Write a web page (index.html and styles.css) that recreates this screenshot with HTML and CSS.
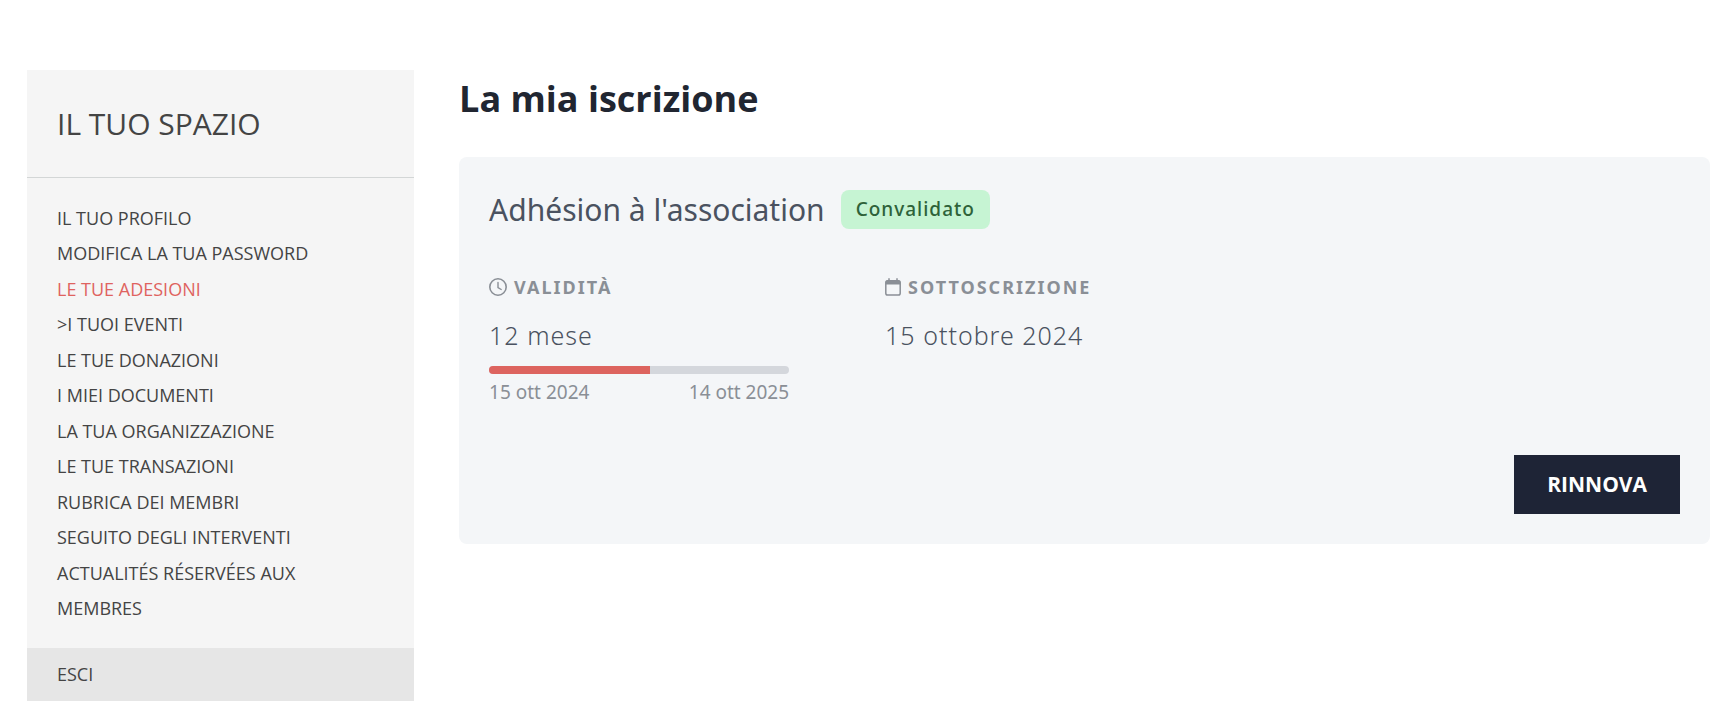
FILE: index.html
```html
<!DOCTYPE html>
<html lang="it">

<head>
    <meta charset="UTF-8">
    <meta name="viewport" content="width=device-width, initial-scale=1.0">
    <title>La mia iscrizione</title>
    <link rel="stylesheet" href="styles.css">
</head>

<body>
    <div class="page">
        <aside class="sidebar">
            <h2 class="sidebar-title">IL TUO SPAZIO</h2>
            <nav>
                <ul class="menu">
                    <li><a href="#">IL TUO PROFILO</a></li>
                    <li><a href="#">MODIFICA LA TUA PASSWORD</a></li>
                    <li><a href="#" class="active">LE TUE ADESIONI</a></li>
                    <li><a href="#">&gt;I TUOI EVENTI</a></li>
                    <li><a href="#">LE TUE DONAZIONI</a></li>
                    <li><a href="#">I MIEI DOCUMENTI</a></li>
                    <li><a href="#">LA TUA ORGANIZZAZIONE</a></li>
                    <li><a href="#">LE TUE TRANSAZIONI</a></li>
                    <li><a href="#">RUBRICA DEI MEMBRI</a></li>
                    <li><a href="#">SEGUITO DEGLI INTERVENTI</a></li>
                    <li><a href="#">ACTUALITÉS RÉSERVÉES AUX MEMBRES</a></li>
                </ul>
                <a href="#" class="logout">ESCI</a>
            </nav>
        </aside>
        <main class="content">
            <h1 class="title">La mia iscrizione</h1>
            <section class="card">
                <div class="card-head">
                    <h2 class="card-title">Adhésion à l'association</h2>
                    <span class="badge">Convalidato</span>
                </div>
                <div class="infos">
                    <div class="info">
                        <h3 class="label">
                            <svg class="icon" viewBox="0 0 18 18" fill="none" stroke="currentColor" stroke-linecap="round">
                                <circle cx="9" cy="9" r="8.2" stroke-width="1.6" />
                                <path d="M9 4.5v5l3.2 2" stroke-width="1.4" />
                            </svg>
                            VALIDITÀ
                        </h3>
                        <p class="value">12 mese</p>
                        <div class="progress">
                            <div class="progress-bar" style="width: 53.7%;"></div>
                        </div>
                        <div class="dates">
                            <span>15 ott 2024</span>
                            <span>14 ott 2025</span>
                        </div>
                    </div>
                    <div class="info">
                        <h3 class="label">
                            <svg class="icon icon-calendar" viewBox="0 0 16 18" fill="none" stroke="currentColor">
                                <rect x="0.8" y="2.7" width="14.4" height="14.4" rx="1.8" stroke-width="1.5" />
                                <path d="M.7 6.6V4.5Q.7 2.2 2.5 2.2h11q1.8 0 1.8 2.3v2.1z" fill="currentColor" stroke="none" />
                                <path d="M4 .3v2.5M12 .3v2.5" stroke-width="1.5" />
                            </svg>
                            SOTTOSCRIZIONE
                        </h3>
                        <p class="value">15 ottobre 2024</p>
                    </div>
                </div>
                <div class="actions">
                    <button type="button" class="btn">RINNOVA</button>
                </div>
            </section>
        </main>
    </div>
</body>

</html>
```
FILE: styles.css
```css
* {
    box-sizing: border-box;
}

body {
    margin: 0;
    background: #fff;
    color: #444;
    font-family: "Open Sans", "Noto Sans", sans-serif;
}

h1,
h2,
h3,
p,
ul {
    margin: 0;
    padding: 0;
}

a {
    color: inherit;
    text-decoration: none;
}

.page {
    display: flex;
    align-items: flex-start;
    gap: 45px;
    padding: 70px 24px 20px 27px;
}

/* sidebar */
.sidebar {
    flex: 0 0 23%;
    background: #f5f5f5;
}

.sidebar-title {
    padding: 30px;
    border-bottom: 1px solid #d3d6d6;
    font-size: 30px;
    font-weight: 400;
    line-height: 47px;
}

.menu {
    padding: 23px 30px 22px;
    list-style: none;
    font-size: 18px;
    line-height: 1.97;
}

.logout {
    display: block;
    padding: 0 30px;
    background: #e6e6e6;
    font-size: 18px;
    line-height: 53px;
}

.active {
    color: #df635f;
}

/* content */
.content {
    flex: 1;
}

.title {
    color: #212631;
    font-size: 36px;
    font-weight: 700;
    line-height: 57px;
}

.card {
    margin-top: 30px;
    padding: 30px;
    background: #f4f6f8;
    border-radius: 8px;
    font-family: "Noto Sans", sans-serif;
}

.card-head {
    display: flex;
    align-items: center;
    gap: 16px;
}

.card-title {
    color: #4a5260;
    font-size: 30px;
    font-weight: 450;
    line-height: 45px;
}

.badge {
    padding: 0 15px;
    background: #c6f4d3;
    border-radius: 8px;
    color: #2e6239;
    font-size: 19px;
    font-weight: 500;
    letter-spacing: 1px;
    line-height: 39px;
}

.infos {
    display: flex;
    gap: 96px;
    margin-top: 40px;
}

.info {
    width: 300px;
}

.label {
    display: flex;
    align-items: center;
    gap: 7px;
    color: #8a8f96;
    font-size: 18px;
    font-weight: 700;
    letter-spacing: 2px;
    line-height: 30px;
}

.icon {
    width: 18px;
    height: 18px;
}

.icon-calendar {
    width: 16px;
}

.value {
    margin-top: 15px;
    color: #4a5260;
    font-size: 25px;
    font-weight: 350;
    letter-spacing: 1px;
    line-height: 36px;
}

.progress {
    height: 8px;
    margin-top: 13px;
    overflow: hidden;
    background: #d4d7dc;
    border-radius: 4px;
}

.progress-bar {
    height: 100%;
    background: #dd645f;
}

.dates {
    display: flex;
    justify-content: space-between;
    margin-top: 4px;
    color: #8a8f96;
    font-size: 19px;
    font-weight: 400;
    line-height: 28px;
}

.actions {
    display: flex;
    justify-content: flex-end;
    margin-top: 49px;
}

.btn {
    padding: 0 33px;
    background: #1e2436;
    border: 0;
    color: #fff;
    font-family: "Open Sans", sans-serif;
    font-size: 21px;
    font-weight: 700;
    line-height: 59px;
    cursor: pointer;
}
```
